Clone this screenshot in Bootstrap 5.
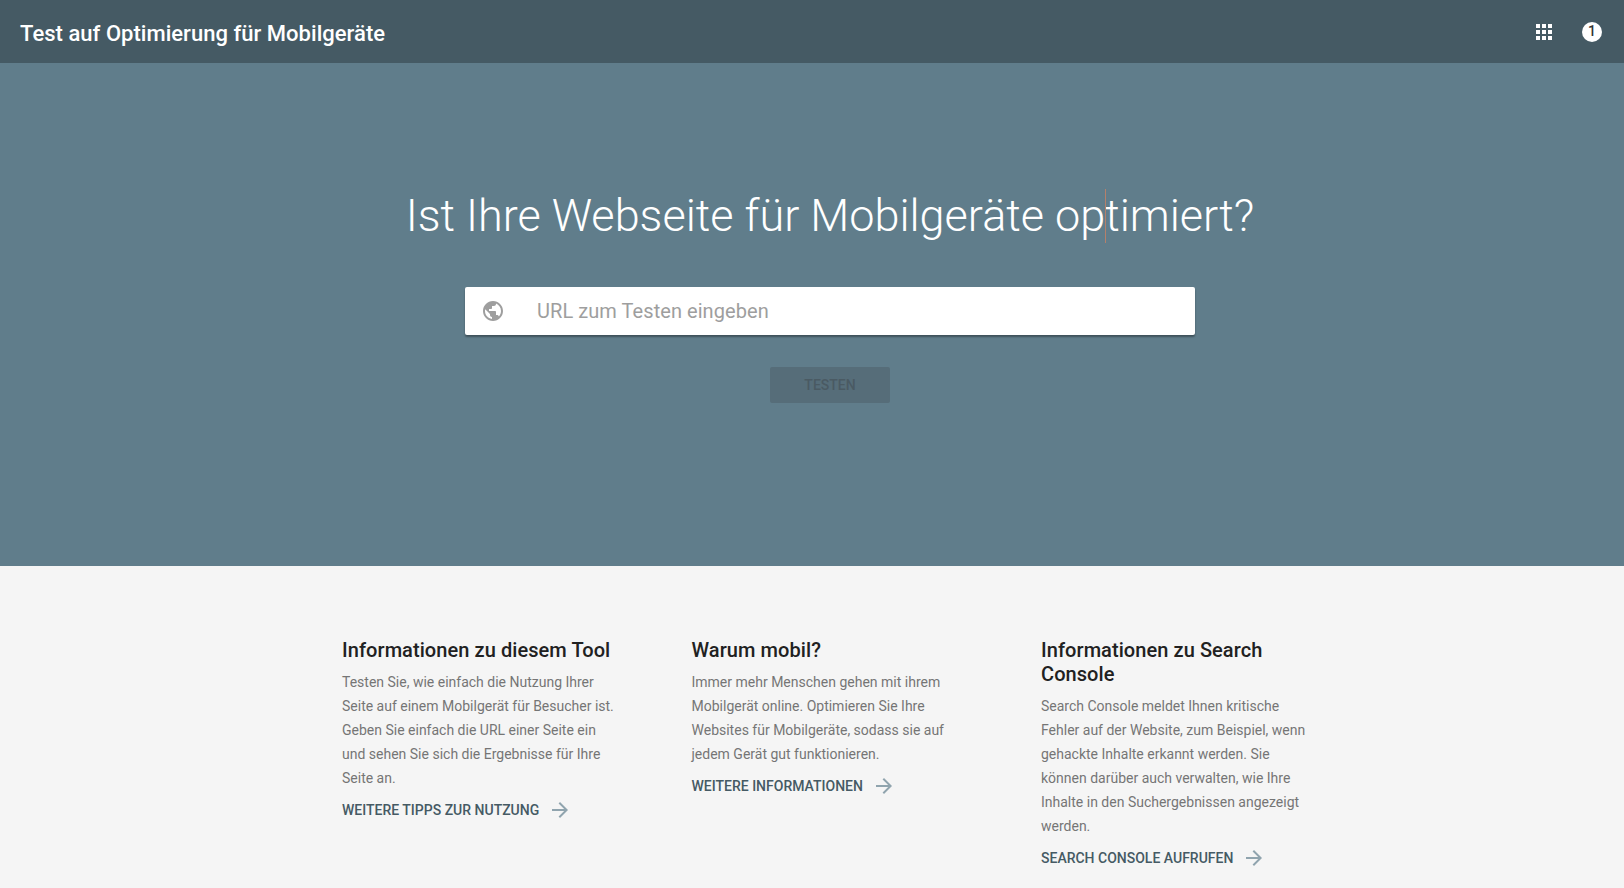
<!DOCTYPE html>
<html lang="de">
<head>
  <meta charset="UTF-8">
  <meta name="viewport" content="width=device-width, initial-scale=1">
  <title>Test auf Optimierung für Mobilgeräte</title>
  <link href="https://cdn.jsdelivr.net/npm/bootstrap@5.3.0/dist/css/bootstrap.min.css" rel="stylesheet">
  <style>
    body {
      font-family: Roboto, "Liberation Sans", sans-serif;
      background-color: #f5f5f5;
    }
    .top-bar {
      height: 63px;
      background-color: #455a64;
      padding: 4px 10px 0 20px;
    }
    .top-bar .navbar-brand {
      font-size: 22px;
      font-weight: 500;
      letter-spacing: .03px;
      color: #fff;
      padding: 0;
      margin: 0;
    }
    .bar-tools {
      margin-top: -4px;
    }
    .bar-icon {
      width: 24px;
      height: 24px;
      fill: #fff;
    }
    .notify-dot {
      width: 20px;
      height: 20px;
      margin: 0 12px 0 26px;
      border-radius: 50%;
      background-color: #fff;
      color: #333;
      font-size: 14px;
      font-weight: 500;
    }
    .hero-area {
      height: 503px;
      padding: 125px 0 0 36px;
      background-color: #607d8b;
    }
    .hero-title {
      font-size: 45px;
      font-weight: 300;
      line-height: 56px;
      color: #fff;
      margin: 0 0 43px;
    }
    .caret-mark {
      position: relative;
    }
    .caret-mark::after {
      content: "";
      position: absolute;
      left: 0;
      top: 0;
      height: 54px;
      width: 1px;
      background-color: #b5806b;
    }
    .url-box {
      width: 730px;
      height: 48px;
      padding-left: 16px;
      background-color: #fff;
      border-radius: 2px;
      box-shadow: 0 2px 2px rgba(0, 0, 0, .35);
    }
    .url-box svg {
      width: 24px;
      height: 24px;
      flex: none;
      fill: #9e9e9e;
    }
    .url-box .form-control {
      margin-left: 32px;
      padding: 0;
      border: 0;
      background: transparent;
      box-shadow: none;
      font-size: 20px;
      letter-spacing: .06px;
      color: #333;
    }
    .url-box .form-control::placeholder {
      color: #9e9e9e;
    }
    .btn.test-btn {
      width: 120px;
      height: 36px;
      margin-top: 32px;
      padding: 0;
      border: 0;
      border-radius: 2px;
      background-color: #566d79;
      color: #4a5a63;
      font-size: 14px;
      font-weight: 500;
      opacity: 1;
    }
    .info-area {
      width: 1048.5px;
      margin-left: 342px;
      padding-top: 72px;
    }
    .info-col {
      padding-right: 73px;
    }
    .info-col h2 {
      font-size: 20px;
      font-weight: 500;
      line-height: 24px;
      letter-spacing: .07px;
      color: #212121;
      margin: 0 0 8px;
    }
    .info-col p {
      font-size: 14px;
      line-height: 24px;
      color: #757575;
      margin: 0 0 8px;
    }
    .more-link {
      font-size: 14px;
      font-weight: 500;
      line-height: 24px;
      color: #455a64;
      text-decoration: none;
      text-transform: uppercase;
    }
    .more-link svg {
      width: 24px;
      height: 24px;
      margin-left: 9px;
      fill: #90a4ae;
    }
  </style>
</head>
<body>
<nav class="navbar top-bar">
  <span class="navbar-brand">Test auf Optimierung für Mobilgeräte</span>
  <div class="bar-tools d-flex align-items-center">
    <svg class="bar-icon" viewBox="0 0 24 24"><path d="M4 8h4V4H4v4zm6 12h4v-4h-4v4zm-6 0h4v-4H4v4zm0-6h4v-4H4v4zm6 0h4v-4h-4v4zm6-10v4h4V4h-4zm-6 4h4V4h-4v4zm6 6h4v-4h-4v4zm0 6h4v-4h-4v4z"/></svg>
    <span class="notify-dot d-flex align-items-center justify-content-center">1</span>
  </div>
</nav>

<section class="hero-area d-flex flex-column align-items-center">
  <h1 class="hero-title">Ist Ihre Webseite für Mobilgeräte op<span class="caret-mark"></span>timiert?</h1>
  <div class="url-box d-flex align-items-center">
    <svg viewBox="0 0 24 24"><path d="M12 2C6.48 2 2 6.48 2 12s4.48 10 10 10 10-4.48 10-10S17.52 2 12 2zm-1 17.93c-3.95-.49-7-3.85-7-7.93 0-.62.08-1.21.21-1.79L9 15v1c0 1.1.9 2 2 2v1.93zm6.9-2.54c-.26-.81-1-1.39-1.9-1.39h-1v-3c0-.55-.45-1-1-1H8v-2h2c.55 0 1-.45 1-1V7h2c1.1 0 2-.9 2-2v-.41c2.93 1.19 5 4.06 5 7.41 0 2.08-.8 3.97-2.1 5.39z"/></svg>
    <input type="text" class="form-control" placeholder="URL zum Testen eingeben">
  </div>
  <button type="button" class="btn test-btn" disabled>TESTEN</button>
</section>

<section class="info-area row g-0">
  <div class="col-4 info-col">
    <h2>Informationen zu diesem Tool</h2>
    <p>Testen Sie, wie einfach die Nutzung Ihrer Seite auf einem Mobilgerät für Besucher ist. Geben Sie einfach die URL einer Seite ein und sehen Sie sich die Ergebnisse für Ihre Seite an.</p>
    <a href="#" class="more-link d-inline-flex align-items-center">Weitere Tipps zur Nutzung
      <svg viewBox="0 0 24 24"><path d="M12 4l-1.41 1.41L16.17 11H4v2h12.17l-5.58 5.59L12 20l8-8z"/></svg></a>
  </div>
  <div class="col-4 info-col">
    <h2>Warum mobil?</h2>
    <p>Immer mehr Menschen gehen mit ihrem Mobilgerät online. Optimieren Sie Ihre Websites für Mobilgeräte, sodass sie auf jedem Gerät gut funktionieren.</p>
    <a href="#" class="more-link d-inline-flex align-items-center">Weitere Informationen
      <svg viewBox="0 0 24 24"><path d="M12 4l-1.41 1.41L16.17 11H4v2h12.17l-5.58 5.59L12 20l8-8z"/></svg></a>
  </div>
  <div class="col-4 info-col">
    <h2>Informationen zu Search Console</h2>
    <p>Search Console meldet Ihnen kritische Fehler auf der Website, zum Beispiel, wenn gehackte Inhalte erkannt werden. Sie können darüber auch verwalten, wie Ihre Inhalte in den Suchergebnissen angezeigt werden.</p>
    <a href="#" class="more-link d-inline-flex align-items-center">Search Console aufrufen
      <svg viewBox="0 0 24 24"><path d="M12 4l-1.41 1.41L16.17 11H4v2h12.17l-5.58 5.59L12 20l8-8z"/></svg></a>
  </div>
</section>

<script src="https://cdn.jsdelivr.net/npm/bootstrap@5.3.0/dist/js/bootstrap.bundle.min.js"></script>
</body>
</html>
